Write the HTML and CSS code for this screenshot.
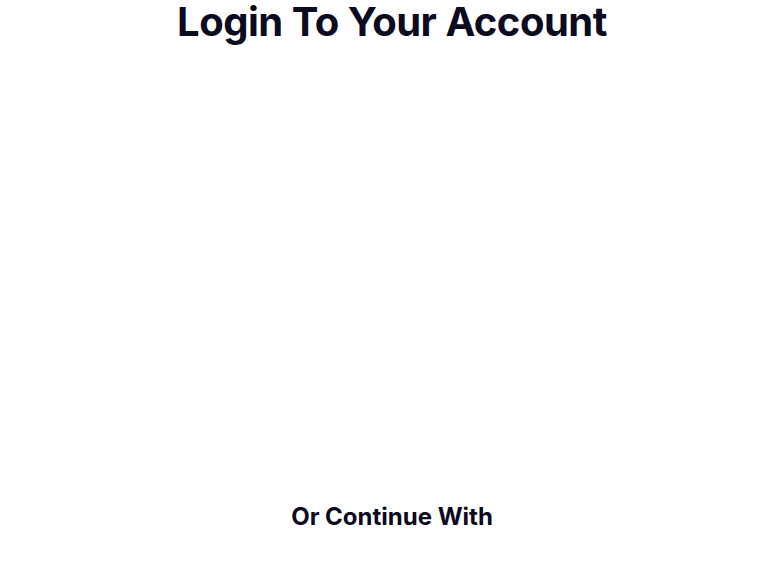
FILE: index.html
```html
<!DOCTYPE html>
<html lang="en">
<head>
<meta charset="utf-8">
<title>Login</title>
<link rel="stylesheet" href="styles.css">
</head>
<body>
<main class="page">
  <h1 class="title">Login To Your Account</h1>
  <form class="form"></form>
  <p class="divider">Or Continue With</p>
</main>
</body>
</html>
```
FILE: styles.css
```css
html, body {
  margin: 0;
  padding: 0;
  background: #ffffff;
}
.page {
  display: flex;
  flex-direction: column;
  align-items: center;
  font-family: Inter, "Liberation Sans", sans-serif;
  color: #0b0a1e;
}
.title {
  margin: 0;
  font-size: 40px;
  line-height: 44px;
  font-weight: 700;
  letter-spacing: -0.5px;
}
.form {
  height: 457px;
}
.divider {
  margin: 0;
  font-size: 24px;
  line-height: 32px;
  font-weight: 700;
}
```
